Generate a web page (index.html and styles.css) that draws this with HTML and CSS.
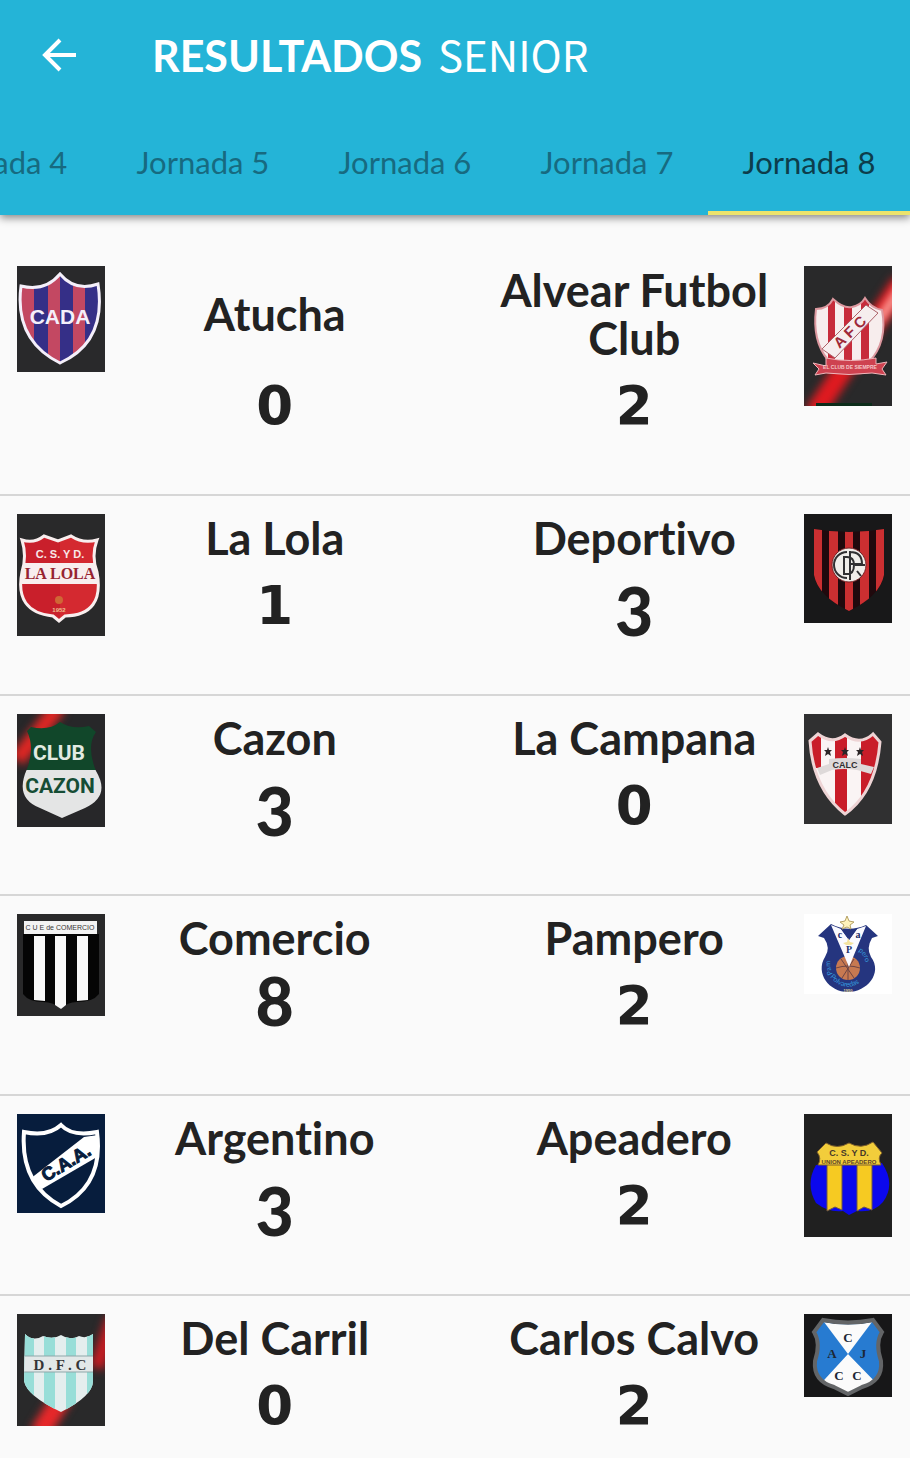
FILE: index.html
```
<!DOCTYPE html>
<html lang="es">
<head>
<meta charset="utf-8">
<meta name="viewport" content="width=device-width, initial-scale=1">
<title>Resultados Senior</title>
<link rel="stylesheet" href="styles.css">
</head>
<body>
<header class="app-bar">
  <div class="toolbar">
    <button class="back" type="button" aria-label="Volver">
      <svg viewBox="0 0 38 38"><path d="M36 19H5M20 4L5 19l15 15" fill="none" stroke="#fff" stroke-width="4"/></svg>
    </button>
    <h1 class="title"><strong>RESULTADOS</strong> <span class="category">SENIOR</span></h1>
  </div>
  <nav class="tabs">
    <a class="tab" href="#j4">Jornada 4</a>
    <a class="tab" href="#j5">Jornada 5</a>
    <a class="tab" href="#j6">Jornada 6</a>
    <a class="tab" href="#j7">Jornada 7</a>
    <a class="tab tab-active" href="#j8" aria-current="page">Jornada 8</a>
  </nav>
</header>
<main class="matches">
  <article class="match">
    <svg class="crest" viewBox="0 0 88 106">
      <rect width="88" height="106" fill="#29292b"/>
      <clipPath id="cada"><path d="M4 20Q28 26 43 8Q58 26 81 18Q90 76 43 97Q-3 74 4 20Z"/></clipPath>
      <g clip-path="url(#cada)"><rect width="88" height="106" fill="#352f87"/><path d="M0 0H17V106H0ZM31 0H43V106H31ZM56 0H68V106H56Z" fill="#c34862"/></g>
      <path d="M4 20Q28 26 43 8Q58 26 81 18Q90 76 43 97Q-3 74 4 20Z" fill="none" stroke="#f4effa" stroke-width="3"/>
      <text class="sans" x="43" y="58" font-size="21" fill="#f4effa">CADA</text>
    </svg>
    <h2 class="team">Atucha</h2>
    <h2 class="team">Alvear Futbol Club</h2>
    <svg class="crest" viewBox="0 0 88 140">
      <rect width="88" height="140" fill="#29292a"/>
      <path class="glow" d="M98 16L10 148" stroke="#e01a20" stroke-width="20"/>
      <path class="glow" d="M98 20L74 56" stroke="#ffb0a8" stroke-width="8"/>
      <path d="M12 137H68V140H12Z" fill="#0c2c1a"/>
      <clipPath id="afc"><path d="M12 43Q24 43 29 33Q40 43 48 41Q57 39 61 32Q67 42 78 44Q84 76 65 96L44 102L24 94Q8 75 12 43Z"/></clipPath>
      <g clip-path="url(#afc)"><rect width="88" height="140" fill="#f7eded"/><path d="M24 30H31V110H24ZM40 30H48V110H40ZM57 30H65V110H57Z" fill="#c72b3a"/><path d="M18 83L62 39L74 47L31 92Z" fill="#f6eeee" stroke="#ac6168"/></g>
      <path d="M12 43Q24 43 29 33Q40 43 48 41Q57 39 61 32Q67 42 78 44Q84 76 65 96L44 102L24 94Q8 75 12 43Z" fill="none" stroke="#dc989f" stroke-width="2"/>
      <text class="sans" x="46" y="71" font-size="15" fill="#9d2939" transform="rotate(-44 46 66)">A F C</text>
      <path d="M9 97L22 100V92Q46 97 72 92V98L83 96L78 103L82 109L68 107Q45 110 22 107L11 109L15 103Z" fill="#ce4250" stroke="#efb6bb"/>
      <text class="sans" x="46" y="103" font-size="5" fill="#f5c6c8">EL CLUB DE SIEMPRE</text>
    </svg>
    <p class="score">0</p>
    <p class="score">2</p>
  </article>

  <article class="match">
    <svg class="crest" viewBox="0 0 88 122">
      <rect width="88" height="122" fill="#29292a"/>
      <clipPath id="lola"><path d="M5 26Q17 30 27 22L41 27L54 22Q66 30 80 26Q74 42 80 58Q88 101 48 102L42 107L36 102Q-3 98 5 58Q10 42 5 26Z"/></clipPath>
      <g clip-path="url(#lola)"><rect width="88" height="122" fill="#c91f2b"/><path d="M43 0H88V122H43Z" fill="#dc3034" opacity=".6"/><path d="M0 49H88V70H0Z" fill="#f8eeee"/></g>
      <path d="M5 26Q17 30 27 22L41 27L54 22Q66 30 80 26Q74 42 80 58Q88 101 48 102L42 107L36 102Q-3 98 5 58Q10 42 5 26Z" fill="none" stroke="#f8eeee" stroke-width="3"/>
      <text class="sans" x="43" y="44" font-size="11" fill="#f8e7e7">C. S. Y D.</text>
      <text class="serif" x="43" y="65" font-size="16" fill="#962331">LA LOLA</text>
      <circle cx="42" cy="86" r="4" fill="#cf6735"/><text class="sans" x="42" y="98" font-size="6" fill="#efc090">1952</text>
    </svg>
    <h2 class="team">La Lola</h2>
    <h2 class="team">Deportivo</h2>
    <svg class="crest" viewBox="0 0 88 109">
      <rect width="88" height="109" fill="#181819"/>
      <clipPath id="depo"><path d="M10 15Q45 21 80 15V61Q76 82 45 97Q14 82 10 61Z"/></clipPath>
      <g clip-path="url(#depo)"><rect width="88" height="109" fill="#20090d"/><path d="M10 0H18V109H10ZM25 0H34V109H25ZM41 0H49V109H41ZM56 0H65V109H56ZM72 0H80V109H72Z" fill="#cb2f31"/></g>
      <circle cx="45" cy="51" r="17" fill="#f0eeea" stroke="#762326"/>
      <path d="M43 38A13 13 0 1 0 43 64M40 43V60H43Q50 60 50 51Q50 43 43 43H39M46 37V66M46 38Q58 38 58 50H46M51 51H61M53 57L57 62" fill="none" stroke="#303032" stroke-width="2"/>
    </svg>
    <p class="score">1</p>
    <p class="score score-low">3</p>
  </article>

  <article class="match">
    <svg class="crest" viewBox="0 0 88 113">
      <rect width="88" height="113" fill="#272729"/>
      <path class="glow" d="M42 -8L0 46" stroke="#df2724" stroke-width="16"/>
      <clipPath id="cazon"><path d="M10 17L14 13Q32 17 43 8Q55 16 72 12L79 18Q69 32 79 57Q94 82 68 94L45 104L23 94Q-3 84 10 55Q18 34 10 17Z"/></clipPath>
      <g clip-path="url(#cazon)"><rect width="88" height="56" fill="#11472a"/><rect y="56" width="88" height="57" fill="#e4e5e5"/></g>
      <text class="sans condensed" x="42" y="46" font-size="21" fill="#e2ebe2">CLUB</text><text class="sans condensed" x="43" y="79" font-size="21" fill="#164d35">CAZON</text>
    </svg>
    <h2 class="team">Cazon</h2>
    <h2 class="team">La Campana</h2>
    <svg class="crest" viewBox="0 0 88 110">
      <rect width="88" height="110" fill="#303031"/>
      <clipPath id="calc"><path d="M6 27L14 20Q28 31 41 21Q56 32 69 20L76 28Q72 78 41 100Q9 75 6 27Z"/></clipPath>
      <g clip-path="url(#calc)"><rect width="88" height="110" fill="#faf4f4"/><path d="M3 20H17V54H3ZM31 20H43V105H31ZM57 20H83V83H57Z" fill="#c91d29"/></g>
      <path d="M6 27L14 20Q28 31 41 21Q56 32 69 20L76 28Q72 78 41 100Q9 75 6 27Z" fill="none" stroke="#eed4d5" stroke-width="3"/>
      <path d="M13 54L25 50V45Q41 43 57 45V50L70 53L67 60L53 56Q40 54 28 56L16 61Z" fill="#ded9d9"/>
      <path id="star" d="M24 33L25 36H28L26 38L27 42L24 40L21 42L22 38L20 36H23Z" fill="#2c2527"/><use href="#star" x="17"/><use href="#star" x="32"/>
      <text class="sans" x="41" y="54" font-size="9" fill="#302e30">CALC</text>
    </svg>
    <p class="score score-low">3</p>
    <p class="score">0</p>
  </article>

  <article class="match">
    <svg class="crest" viewBox="0 0 88 102">
      <rect width="88" height="102" fill="#29292a"/><path d="M6 20H82V80Q76 88 60 88Q50 88 44 95Q37 88 26 88Q12 88 6 80Z" fill="#050505"/>
      <path d="M17 22H28V87L17 86ZM38 22H49V91L44 95L38 91ZM60 22H71V86L60 87Z" fill="#f8f8f8"/><path d="M7 7H80V20H7Z" fill="#f3f3f3"/>
      <text class="sans light" x="43" y="16" font-size="7" fill="#363636">C U E de COMERCIO</text>
    </svg>
    <h2 class="team">Comercio</h2>
    <h2 class="team">Pampero</h2>
    <svg class="crest" viewBox="0 0 88 80">
      <rect width="88" height="80" fill="#fff"/>
      <path d="M27 10L14 22L20 24Q27 34 21 43C11 59 25 78 44 78S79 59 67 43Q62 34 68 24L74 22L62 11Q44 19 27 10Z" fill="#25357f"/>
      <circle cx="44" cy="54" r="12" fill="#c77951"/><path d="M32 54Q44 50 56 54M37 45L50 64M50 45L38 64M44 42V66" stroke="#6e4544" fill="none"/>
      <path d="M27 11L45 53L62 12L53 15L45 26L37 15Z" fill="#fafaff"/><path d="M37 15L45 26L53 15Z" fill="#25357f"/>
      <path d="M43 2L45 7L50 8L46 11L47 15L43 13L38 15L40 11L36 8L41 7Z" fill="#fff3bb" stroke="#b6a266"/>
      <path d="M44 24L46 28L50 29L47 31H42L39 29L43 28Z" fill="#f3e39e"/>
      <text class="serif" x="36" y="24" font-size="10" fill="#202b65">c</text><text class="serif" x="54" y="24" font-size="10" fill="#202b65">a</text><text class="serif" x="45" y="39" font-size="10" fill="#24346e">P</text>
      <path id="pamp" d="M29 60Q22 47 32 36" fill="none"/><path id="ero" d="M54 37Q65 44 60 60" fill="none"/><path id="foot" d="M26 63Q44 83 63 62" fill="none"/>
      <g class="ring"><text><textPath href="#pamp">Pam</textPath></text><text><textPath href="#ero">pero</textPath></text><text><textPath href="#foot">Polvaredas</textPath></text></g>
      <text class="sans" x="44" y="78" font-size="4" fill="#e5d69a">1950</text>
    </svg>
    <p class="score score-high">8</p>
    <p class="score">2</p>
  </article>

  <article class="match">
    <svg class="crest" viewBox="0 0 88 99">
      <rect width="88" height="99" fill="#071d3d"/>
      <clipPath id="caa"><path d="M7 18Q31 23 44 11Q55 23 80 18Q87 71 44 92Q3 70 7 18Z"/></clipPath>
      <path d="M13 65L67 23L87 20L80 43L25 75Z" fill="#fff" clip-path="url(#caa)"/>
      <path d="M7 18Q31 23 44 11Q55 23 80 18Q87 71 44 92Q3 70 7 18Z" fill="none" stroke="#fff" stroke-width="4"/>
      <text class="sans" x="49" y="55" font-size="18" fill="#071d3d" stroke="#071d3d" transform="rotate(-31 49 49)">C.A.A.</text>
    </svg>
    <h2 class="team">Argentino</h2>
    <h2 class="team">Apeadero</h2>
    <svg class="crest" viewBox="0 0 88 123">
      <rect width="88" height="123" fill="#202020"/><path d="M12 51Q1 70 12 89Q25 99 39 97L45 101L53 97Q70 99 79 88Q92 70 78 49Z" fill="#0b08ed"/>
      <path d="M23 50H38V96L31 93L23 97ZM53 50H68V96L60 93L53 97Z" fill="#f6ca22" stroke="#715846"/>
      <path d="M22 29Q33 36 45 29Q57 36 69 28L78 39Q73 43 77 51H14Q18 44 13 38Z" fill="#f2cd3b" stroke="#80612b"/>
      <text class="sans" x="45" y="42" font-size="9" fill="#463829">C. S. Y D.</text><text class="sans" x="45" y="50" font-size="6" fill="#604527">UNION APEADERO</text>
    </svg>
    <p class="score score-low">3</p>
    <p class="score">2</p>
  </article>

  <article class="match">
    <svg class="crest" viewBox="0 0 88 112">
      <rect width="88" height="112" fill="#29292a"/>
      <path class="glow" d="M96 4L80 54" stroke="#c81c22" stroke-width="14"/>
      <path class="glow" d="M46 82L22 120" stroke="#e8282a" stroke-width="20"/>
      <clipPath id="dfc"><path d="M8 20Q16 28 26 22Q36 26 44 21Q53 27 62 22Q69 25 76 20V67Q76 82 44 98Q10 82 7 67Z"/></clipPath>
      <g clip-path="url(#dfc)"><rect width="88" height="112" fill="#e4eeee"/><path d="M7 0H17V112H7ZM27 0H38V112H27ZM49 0H59V112H49ZM70 0H77V112H70Z" fill="#98ded8"/><path d="M0 42H88V58H0Z" fill="#e2e8e8" stroke="#8ea7a9"/></g>
      <text class="serif" x="43" y="56" font-size="15" fill="#343536">D . F . C</text>
    </svg>
    <h2 class="team">Del Carril</h2>
    <h2 class="team">Carlos Calvo</h2>
    <svg class="crest" viewBox="0 0 88 83">
      <rect width="88" height="83" fill="#171718"/>
      <clipPath id="ajcc"><path d="M19 8Q44 13 69 8L78 18Q71 29 77 47Q79 67 58 73L44 80L30 73Q9 67 11 47Q17 29 10 18Z"/></clipPath>
      <g clip-path="url(#ajcc)"><rect width="88" height="83" fill="#277bd1"/><path d="M14 0L44 40L74 0ZM10 77L44 40L80 77V83H10Z" fill="#fbfbfb"/></g>
      <path d="M19 6Q44 11 69 6L78 18Q71 29 77 47Q79 67 58 73L44 80L30 73Q9 67 11 47Q17 29 10 18Z" fill="none" stroke="#636567" stroke-width="4"/>
      <g fill="#1c2735" font-size="13"><text class="serif" x="44" y="28">C</text><text class="serif" x="28" y="44">A</text><text class="serif" x="59" y="44">J</text><text class="serif" x="35" y="66">C</text><text class="serif" x="53" y="66">C</text></g>
    </svg>
    <p class="score">0</p>
    <p class="score">2</p>
  </article>
</main>
</body>
</html>
```
FILE: styles.css
```
* { box-sizing: border-box; }
body {
  margin: 0;
  background: #fafafa;
  color: #222;
  font-family: Lato, "Open Sans", sans-serif;
  font-variant-ligatures: none;
}
.app-bar {
  position: relative;
  background: #24b4d7;
  box-shadow: 0 3px 8px rgba(0, 0, 0, .45);
}
.toolbar {
  display: flex;
  align-items: center;
  height: 110px;
  padding: 0 40px;
  gap: 74px;
}
.back {
  width: 38px;
  height: 38px;
  padding: 0;
  border: 0;
  background: none;
}
.back svg { display: block; width: 100%; }
.title {
  display: flex;
  align-items: baseline;
  gap: 16px;
  margin: 0;
  color: #fff;
  font-size: 43px;
  font-weight: 400;
  line-height: 54px;
}
.category { font-family: "Noto Sans CJK SC", "Noto Sans", sans-serif; font-size: 42px; }
.tabs {
  display: flex;
  justify-content: flex-end;
  overflow: hidden;
}
.tab {
  flex: 0 0 22.2%;
  height: 105px;
  border-bottom: 4px solid transparent;
  color: #176a80;
  font-size: 31px;
  line-height: 104px;
  text-align: center;
  text-decoration: none;
  white-space: nowrap;
}
.tab-active { border-color: #ece36c; color: #0d3d4b; }
.matches { padding-top: 33px; }
.match {
  display: grid;
  grid-template-columns: 88px 1fr 20px 1fr 88px;
  grid-template-rows: auto 80px;
  padding: 18px 18px 52px 17px;
  border-bottom: 2px solid #d6d6d6;
}
.match:last-child { border-bottom: 0; padding-bottom: 0; }
.crest { grid-row: 1 / 3; display: block; width: 100%; }
.crest:last-of-type { grid-column: 5; }
.team {
  grid-row: 1;
  align-self: center;
  margin: 0;
  padding: 0 20px;
  font-size: 45px;
  font-weight: 700;
  line-height: 48px;
  text-align: center;
}
.team + .team { grid-column: 4; }
.score {
  grid-row: 2;
  grid-column: 2;
  margin: 0;
  font-family: "DejaVu Sans", sans-serif;
  font-size: 53px;
  font-weight: 700;
  line-height: 88px;
  text-align: center;
}
.score + .score { grid-column: 4; }
.score-low,
.score-high { font-family: Lato, sans-serif; font-size: 66px; font-weight: 900; }
.score-low { line-height: 98px; }
.score-high { line-height: 78px; }
.sans { font-family: "Liberation Sans", sans-serif; font-weight: 700; text-anchor: middle; }
.serif { font-family: "Liberation Serif", serif; font-weight: 700; text-anchor: middle; }
.condensed { font-family: Roboto, "Liberation Sans", sans-serif; }
.light { font-weight: 400; }
.ring { fill: #369bdd; font-size: 7px; }
.glow { filter: blur(4px); }
```
